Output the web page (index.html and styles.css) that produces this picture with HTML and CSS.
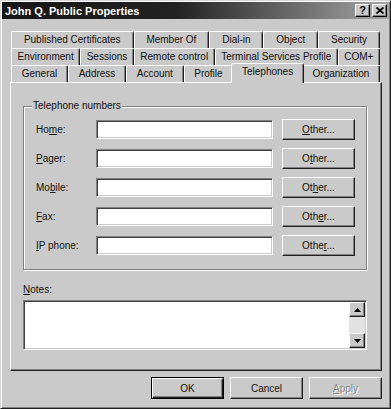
FILE: index.html
```html
<!DOCTYPE html>
<html lang="en">
<head>
  <meta charset="UTF-8" />
  <title>John Q. Public Properties</title>
  <link rel="stylesheet" href="styles.css">
</head>
<body>

<div class="window">
  <div class="titlebar">
    <span class="title">John Q. Public Properties</span>
    <div class="tb-buttons">
      <span class="tb-btn">?</span>
      <span class="tb-btn">
        <svg width="8" height="7" viewBox="0 0 8 7"><path d="M0.5 0.5L7.5 6.5M7.5 0.5L0.5 6.5" stroke="#000" stroke-width="1.7" /></svg>
      </span>
    </div>
  </div>

  <div class="main">
    <div class="tabs">
      <div class="tab-row">
        <div class="tab">Published Certificates</div>
        <div class="tab">Member Of</div>
        <div class="tab">Dial-in</div>
        <div class="tab">Object</div>
        <div class="tab">Security</div>
      </div>
      <div class="tab-row">
        <div class="tab">Environment</div>
        <div class="tab">Sessions</div>
        <div class="tab">Remote control</div>
        <div class="tab">Terminal Services Profile</div>
        <div class="tab">COM+</div>
      </div>
      <div class="tab-row">
        <div class="tab">General</div>
        <div class="tab">Address</div>
        <div class="tab">Account</div>
        <div class="tab">Profile</div>
        <div class="tab active">Telephones</div>
        <div class="tab">Organization</div>
      </div>
    </div>

    <div class="panel">
      <fieldset class="group">
        <legend>Telephone numbers</legend>
        <div class="field">
          <label>Ho<u>m</u>e:</label>
          <input type="text" />
          <button class="btn other"><u>O</u>ther...</button>
        </div>
        <div class="field">
          <label><u>P</u>ager:</label>
          <input type="text" />
          <button class="btn other">O<u>t</u>her...</button>
        </div>
        <div class="field">
          <label>Mo<u>b</u>ile:</label>
          <input type="text" />
          <button class="btn other">Ot<u>h</u>er...</button>
        </div>
        <div class="field">
          <label><u>F</u>ax:</label>
          <input type="text" />
          <button class="btn other">Oth<u>e</u>r...</button>
        </div>
        <div class="field">
          <label><u>I</u>P phone:</label>
          <input type="text" />
          <button class="btn other">Othe<u>r</u>...</button>
        </div>
      </fieldset>

      <div class="notes-label"><u>N</u>otes:</div>
      <div class="notes-box">
        <textarea class="notes-input"></textarea>
        <div class="scrollbar">
          <div class="sb-btn">
            <svg width="7" height="4" viewBox="0 0 7 4"><polygon points="3.5,0 7,4 0,4" fill="#000" /></svg>
          </div>
          <div class="sb-track"></div>
          <div class="sb-btn">
            <svg width="7" height="4" viewBox="0 0 7 4"><polygon points="0,0 7,0 3.5,4" fill="#000" /></svg>
          </div>
        </div>
      </div>
    </div>

    <div class="actions">
      <button class="btn default">OK</button>
      <button class="btn">Cancel</button>
      <button class="btn disabled"><u>A</u>pply</button>
    </div>
  </div>
</div>

</body>
</html>
```

FILE: styles.css
```css
/* General */
body {
  margin: 0;
  font-family: "Liberation Sans", Arial, sans-serif;
  font-size: 10px;
  color: #111;
  background: #cacaca;
}

/* Window frame */
.window {
  width: 391px;
  height: 409px;
  box-sizing: border-box;
  background: #cacaca;
  border: 1px solid;
  border-color: #d8d8d8 #202020 #202020 #d8d8d8;
  box-shadow: inset 1px 1px #fff, inset -1px -1px #808080;
  padding: 1px;
  display: flex;
  flex-direction: column;
}

/* Title bar */
.titlebar {
  height: 17px;
  display: flex;
  align-items: center;
  justify-content: space-between;
  padding: 0 2px 0 3px;
  background: linear-gradient(to right, #161616 0%, #222 45%, #a6a6a6 100%);
  color: #fff;
  font-weight: bold;
  font-size: 11px;
}

.tb-buttons {
  display: flex;
  gap: 2px;
}

.tb-btn {
  width: 15px;
  height: 13px;
  box-sizing: border-box;
  display: flex;
  align-items: center;
  justify-content: center;
  background: #cacaca;
  border: 1px solid;
  border-color: #fff #000 #000 #fff;
  box-shadow: inset -1px -1px #808080;
  color: #000;
  font-size: 11px;
  font-weight: bold;
  line-height: 11px;
}

/* Content */
.main {
  flex: 1;
  padding: 12px 7px 0 8px;
}

/* Tabs */
.tabs {
  margin: 0 2px 0 1px;
}

.tab-row {
  display: flex;
  align-items: flex-end;
  height: 17px;
}

.tab {
  flex: 1 1 auto;
  height: 17px;
  box-sizing: border-box;
  border: 1px solid;
  border-bottom: 0;
  border-color: #fff #202020 #fff #fff;
  box-shadow: inset -1px 0 #808080;
  border-radius: 2px 2px 0 0;
  background: #cacaca;
  text-align: center;
  line-height: 15px;
  white-space: nowrap;
}

.tab.active {
  height: 20px;
  margin: 0 -2px -1px;
  position: relative;
  z-index: 1;
}

/* Panel */
.panel {
  height: 289px;
  box-sizing: border-box;
  border: 1px solid;
  border-color: #fff #202020 #202020 #fff;
  box-shadow: inset -1px -1px #808080;
  padding: 17px 14px 0 12px;
}

.group {
  margin: 0;
  min-width: 0;
  padding: 7px 0 13px 8px;
  border: 1px solid #808080;
  box-shadow: inset 1px 1px #fff, 1px 1px #fff;
}

.group legend {
  padding: 0 1px;
  line-height: 12px;
  background: #cacaca;
}

.field {
  display: flex;
  align-items: center;
  height: 21px;
}

.field + .field {
  margin-top: 8px;
}

.field label {
  width: 60px;
  margin-left: 4px;
}

.field input {
  width: 177px;
  height: 19px;
  box-sizing: border-box;
  margin: 0;
  padding: 0 3px;
  font: inherit;
  background: #fff;
  border: 1px solid;
  border-color: #808080 #fff #fff #808080;
  box-shadow: inset 1px 1px #404040, inset -1px -1px #cacaca;
  outline: none;
}

/* Buttons */
.btn {
  width: 73px;
  height: 22px;
  box-sizing: border-box;
  margin: 0;
  padding: 0;
  font: inherit;
  color: #111;
  background: #cacaca;
  border: 1px solid;
  border-color: #fff #202020 #202020 #fff;
  box-shadow: inset -1px -1px #808080;
}

.btn.other {
  height: 21px;
  margin-left: 9px;
}

.btn.default {
  border-color: #000;
  box-shadow: inset 1px 1px #fff, inset -1px -1px #202020, inset -2px -2px #808080;
}

.btn.disabled {
  color: #888;
  text-shadow: 1px 1px #fff;
}

/* Notes */
.notes-label {
  margin-top: 14px;
  line-height: 12px;
}

.notes-box {
  display: flex;
  height: 50px;
  margin-top: 4px;
  box-sizing: border-box;
  background: #fff;
  border: 1px solid;
  border-color: #808080 #fff #fff #808080;
  box-shadow: inset 1px 1px #404040, inset -1px -1px #cacaca;
  padding: 1px 1px 1px 1px;
}

.notes-input {
  flex: 1;
  border: 0;
  margin: 0;
  padding: 2px;
  resize: none;
  outline: none;
  font: inherit;
  background: #fff;
}

.scrollbar {
  width: 16px;
  display: flex;
  flex-direction: column;
  background: #e2e2e2;
}

.sb-btn {
  height: 15px;
  box-sizing: border-box;
  display: flex;
  align-items: center;
  justify-content: center;
  background: #cacaca;
  border: 1px solid;
  border-color: #fff #202020 #202020 #fff;
  box-shadow: inset -1px -1px #808080;
}

.sb-track {
  flex: 1;
}

/* Dialog buttons */
.actions {
  display: flex;
  justify-content: flex-end;
  gap: 6px;
  margin-top: 6px;
}
```
